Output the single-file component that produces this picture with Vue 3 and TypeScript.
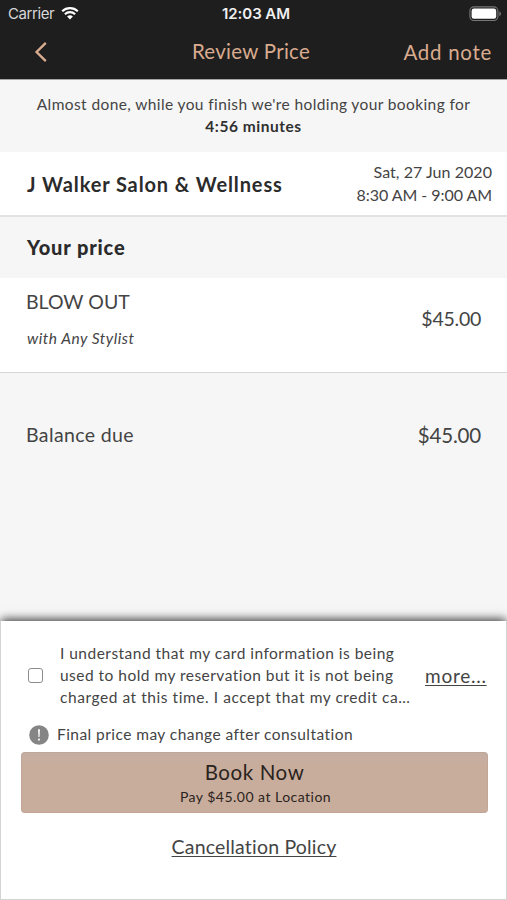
<script setup lang="ts">
import { ref } from 'vue'

interface Service {
  name: string
  stylist: string
  price: string
}

const accepted = ref(false)
const service: Service = { name: 'BLOW OUT', stylist: 'with Any Stylist', price: '$45.00' }
const policyLines: string[] = [
  'I understand that my card information is being',
  'used to hold my reservation but it is not being',
  'charged at this time. I accept that my credit ca…',
]
</script>

<template>
  <div class="screen">
    <header class="top">
      <div class="status">
        <div class="carrier">
          <span>Carrier</span>
          <svg class="wifi" width="18" height="13" viewBox="0 0 18 13">
            <path d="M9 12.6 6.1 9.6a4.2 4.2 0 0 1 5.8 0Z" fill="#fff" />
            <path d="M3.9 7.2a7.3 7.3 0 0 1 10.2 0" fill="none" stroke="#fff" stroke-width="2.1" />
            <path d="M1.2 4.3a11.2 11.2 0 0 1 15.6 0" fill="none" stroke="#fff" stroke-width="2.1" />
          </svg>
        </div>
        <span class="clock">12:03 AM</span>
        <svg class="battery" width="33" height="16" viewBox="0 0 33 16">
          <rect x="0.9" y="0.9" width="28" height="13.6" rx="4" fill="none" stroke="#777" stroke-width="1.1" />
          <rect x="2.6" y="2.6" width="24.6" height="10.2" rx="2.3" fill="#fff" />
          <path d="M30.3 5.4c2.2.7 2.2 3.9 0 4.6Z" fill="#777" />
        </svg>
      </div>
      <nav class="nav">
        <button class="back" aria-label="Back">
          <svg width="14" height="22" viewBox="0 0 14 22">
            <path d="M11.8 1.8 2.6 11l9.2 9.2" fill="none" stroke="currentColor" stroke-width="2.4" />
          </svg>
        </button>
        <h1 class="title">Review Price</h1>
        <button class="note">Add note</button>
      </nav>
    </header>

    <section class="hold">
      <p class="hold-text">Almost done, while you finish we're holding your booking for</p>
      <p class="hold-time">4:56 minutes</p>
    </section>

    <section class="venue">
      <h2 class="venue-name">J Walker Salon &amp; Wellness</h2>
      <div class="when">
        <div>Sat, 27 Jun 2020</div>
        <div class="hours">8:30 AM - 9:00 AM</div>
      </div>
    </section>

    <h3 class="heading">Your price</h3>

    <section class="service">
      <div>
        <div class="service-name">{{ service.name }}</div>
        <div class="stylist">{{ service.stylist }}</div>
      </div>
      <div class="price">{{ service.price }}</div>
    </section>

    <section class="balance">
      <span class="balance-label">Balance due</span>
      <span class="balance-price">{{ service.price }}</span>
    </section>

    <footer class="sheet">
      <div class="consent">
        <input v-model="accepted" class="check" type="checkbox" aria-label="Accept" />
        <div class="policy">
          <div v-for="(line, i) in policyLines" :key="i" class="line">{{ line }}</div>
        </div>
        <a class="more">more...</a>
      </div>
      <div class="final">
        <svg width="20" height="20" viewBox="0 0 20 20">
          <circle cx="10" cy="10" r="9.8" fill="#858585" />
          <path d="M9 4.3h2l-.4 7.6H9.4Z" fill="#f4f4f4" />
          <circle cx="10" cy="14.6" r="1.15" fill="#f4f4f4" />
        </svg>
        <span class="final-text">Final price may change after consultation</span>
      </div>
      <button class="book">
        <span class="book-main">Book Now</span>
        <span class="book-sub">Pay $45.00 at Location</span>
      </button>
      <a class="cancel">Cancellation Policy</a>
    </footer>
  </div>
</template>

<style>
body {
  margin: 0;
  background: #f6f6f6;
}
</style>

<style scoped>
.screen {
  display: flex;
  flex-direction: column;
  box-sizing: border-box;
  width: 507px;
  height: 900px;
  overflow: hidden;
  background: #f6f6f6;
  color: #444;
  font-family: Lato, "Liberation Sans", sans-serif;
  white-space: nowrap;
}
h1, h2, h3, p { margin: 0; }
button {
  padding: 0;
  border: 0;
  background: none;
  font-family: inherit;
}
.top {
  box-sizing: border-box;
  height: 80px;
  background: #1e1e1e;
  border-bottom: 1px solid #a5a5a5;
}
.status {
  display: grid;
  grid-template-columns: 1fr auto 1fr;
  align-items: center;
  height: 27px;
  padding: 0 5px 0 8px;
  color: #fff;
  font-family: Inter, "Liberation Sans", sans-serif;
  font-size: 15px;
}
.carrier {
  display: flex;
  align-items: center;
  gap: 7px;
  color: #d8d8d8;
  letter-spacing: -0.4px;
}
.clock {
  margin-left: 2px;
  color: #f0f0f0;
  font-weight: 600;
  letter-spacing: -0.08px;
}
.battery { justify-self: end; }
.nav {
  display: grid;
  grid-template-columns: 1fr auto 1fr;
  align-items: center;
  height: 49px;
  padding: 0 15px 0 34px;
  color: #d9ab8f;
}
.back {
  display: flex;
  color: #d9ab8f;
  justify-self: start;
}
.title {
  margin-left: -24px;
  padding-bottom: 1px;
  font-size: 20.5px;
  font-weight: 400;
  letter-spacing: 0.28px;
}
.note {
  color: #d9ab8f;
  font-size: 20.5px;
  letter-spacing: 0.71px;
  justify-self: end;
}
.hold {
  box-sizing: border-box;
  height: 72px;
  padding-top: 14px;
  font-size: 15.5px;
  line-height: 21.5px;
  text-align: center;
}
.hold-text { letter-spacing: 0.39px; }
.hold-time {
  color: #303030;
  font-weight: 700;
  letter-spacing: 0.53px;
}
.venue {
  display: flex;
  align-items: center;
  justify-content: space-between;
  box-sizing: border-box;
  height: 65px;
  padding: 0 15px 0 27px;
  border-bottom: 2px solid #e3e3e3;
  background: #fff;
}
.venue-name {
  color: #2b2b2b;
  font-size: 20px;
  font-weight: 700;
  letter-spacing: 0.88px;
}
.when {
  padding-bottom: 2px;
  font-size: 16px;
  line-height: 23px;
  letter-spacing: 0.05px;
  text-align: right;
}
.hours { letter-spacing: -0.05px; }
.heading {
  height: 61px;
  padding-left: 27px;
  color: #2b2b2b;
  font-size: 20px;
  font-weight: 900;
  line-height: 60px;
  letter-spacing: 0.85px;
}
.service {
  display: flex;
  align-items: flex-start;
  justify-content: space-between;
  box-sizing: border-box;
  height: 95px;
  padding: 12px 26px 0;
  border-bottom: 1px solid #d6d6d6;
  background: #fff;
}
.service-name {
  font-size: 19.5px;
  line-height: 24px;
  letter-spacing: 0;
}
.stylist {
  margin-top: 12px;
  padding-left: 1px;
  font-size: 15.5px;
  font-style: italic;
  line-height: 24px;
  letter-spacing: 0.5px;
}
.price {
  padding-top: 17px;
  font-size: 19.5px;
  line-height: 24px;
  letter-spacing: -0.25px;
}
.balance {
  display: flex;
  align-items: center;
  justify-content: space-between;
  height: 124px;
  padding: 0 26px;
}
.balance-label {
  padding-bottom: 1px;
  font-size: 19.5px;
  letter-spacing: 0.38px;
}
.balance-price {
  font-size: 20.5px;
  letter-spacing: -0.18px;
}
.sheet {
  display: flex;
  flex-direction: column;
  box-sizing: border-box;
  height: 279px;
  margin-top: auto;
  padding: 22px 18px 0 19px;
  border: solid #d4d4d4;
  border-width: 0 1px 1px;
  background: #fff;
  box-shadow: 0 -3px 9px -1px rgba(0, 0, 0, 0.75);
}
.consent {
  display: flex;
  align-items: center;
  height: 66px;
  padding-left: 8px;
}
.check {
  appearance: none;
  box-sizing: border-box;
  width: 15px;
  height: 15px;
  margin: 0 17px 2px 0;
  border: 1px solid #8c8c8c;
  border-radius: 3px;
  background: #fff;
}
.policy {
  width: 365px;
  font-size: 15.5px;
  line-height: 21.75px;
  letter-spacing: 0.475px;
}
.line:last-child { letter-spacing: 0.553px; }
.more {
  padding-bottom: 2px;
  font-size: 19px;
  letter-spacing: 0.75px;
  text-decoration: underline;
  text-decoration-thickness: 1px;
  text-underline-offset: 2px;
}
.final {
  display: flex;
  align-items: center;
  gap: 8px;
  height: 20px;
  margin-top: 16px;
  padding-left: 9px;
  font-size: 15.5px;
  letter-spacing: 0.443px;
}
.final-text { padding-bottom: 2px; }
.book {
  display: flex;
  flex-direction: column;
  align-items: center;
  height: 61px;
  margin: 7px 0 0 1px;
  padding-top: 8px;
  border-radius: 4px;
  background: linear-gradient(#c4aea2, #c9ad9c 14px);
  box-shadow: inset 0 0 0 1px rgba(160, 130, 115, 0.15);
  color: #2a2320;
}
.book-main {
  font-size: 20.5px;
  line-height: 25px;
  letter-spacing: 0.6px;
}
.book-sub {
  padding-left: 2px;
  font-size: 14px;
  line-height: 24px;
  letter-spacing: 0.478px;
}
.cancel {
  margin-top: 21px;
  font-size: 19.5px;
  line-height: 25px;
  letter-spacing: 0.19px;
  text-align: center;
  text-decoration: underline;
  text-decoration-thickness: 1px;
  text-underline-offset: 2px;
  text-decoration-skip-ink: none;
}
</style>
